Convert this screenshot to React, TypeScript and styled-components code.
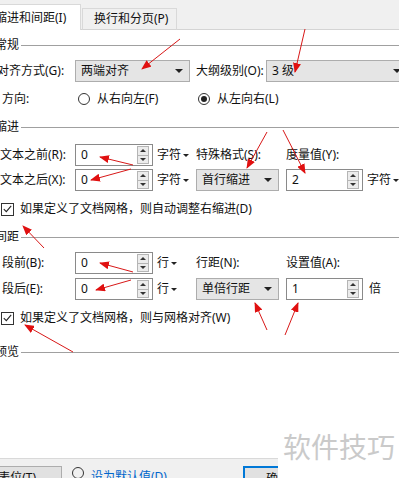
import React from 'react';
import styled, { createGlobalStyle } from 'styled-components';

const Global = createGlobalStyle`
	html, body {
		margin: 0;
		padding: 0;
		background: #fff;
	}
	body {
		font-family: 'Noto Sans', 'Noto Sans CJK SC', sans-serif;
		font-size: 12px;
		color: #111;
	}
`;

const Page = styled.div`
	position: relative;
	width: 399px;
	height: 478px;
	overflow: hidden;
	background: #fff;
	display: flex;
	flex-direction: column;
`;

const TabBar = styled.div`
	height: 30px;
	box-sizing: border-box;
	background: #f0f0f0;
	border-bottom: 1px solid #d4d4d4;
	display: flex;
	align-items: flex-end;
	margin-left: -10px;
`;

const Tab = styled.div<{ $active?: boolean }>`
	box-sizing: border-box;
	height: ${p => (p.$active ? '26px' : '22px')};
	width: ${p => (p.$active ? '91px' : '95px')};
	margin-bottom: -1px;
	margin-left: ${p => (p.$active ? '0' : '1px')};
	padding-left: ${p => (p.$active ? '4px' : '11px')};
	padding-bottom: ${p => (p.$active ? '0' : '1px')};
	background: ${p => (p.$active ? '#fff' : '#f0f0f0')};
	border: 1px solid #d9d9d9;
	border-bottom: ${p => (p.$active ? 'none' : '1px solid #d4d4d4')};
	display: flex;
	align-items: center;
	white-space: nowrap;
	line-height: 1;
`;

const SectionTitle = styled.div<{ $top: number }>`
	display: flex;
	align-items: center;
	height: 16px;
	margin-top: ${p => p.$top}px;
	margin-left: -5px;
	line-height: 1;
	white-space: nowrap;

	&::after {
		content: '';
		flex: 1;
		margin-left: 2px;
		border-top: 1px solid #a0a0a0;
	}
`;

const Row = styled.div<{ $top: number; $height?: number }>`
	display: flex;
	align-items: center;
	margin-top: ${p => p.$top}px;
	height: ${p => p.$height ?? 22}px;
	white-space: nowrap;
`;

const Label = styled.div<{ $width: number; $indent?: number }>`
	width: ${p => p.$width}px;
	flex: none;
	margin-left: ${p => p.$indent ?? 0}px;
	line-height: 1;
	white-space: nowrap;
`;

const Caret = styled.span`
	display: inline-block;
	width: 0;
	height: 0;
	border-left: 4px solid transparent;
	border-right: 4px solid transparent;
	border-top: 4px solid #222;
`;

const SmallCaret = styled(Caret)`
	border-left-width: 3px;
	border-right-width: 3px;
	border-top-width: 3px;
	margin-left: 2px;
	vertical-align: middle;
`;

const Select = styled.div<{ $width: number }>`
	box-sizing: border-box;
	width: ${p => p.$width}px;
	flex: none;
	height: 22px;
	background: #e5e5e5;
	border: 1px solid #adadad;
	display: flex;
	align-items: center;
	justify-content: space-between;
	padding: 0 ${p => (p.$width > 120 ? 4 : 6)}px 0 5px;
	line-height: 1;
`;

const Grid = styled.div<{ $top: number; $gap: number }>`
	display: grid;
	grid-template-columns: 75px 78px 43px 90px 77px 1fr;
	grid-auto-rows: 22px;
	row-gap: ${p => p.$gap}px;
	align-items: center;
	margin-top: ${p => p.$top}px;
	white-space: nowrap;
	line-height: 1;
`;

const SpinBox = styled.div`
	box-sizing: border-box;
	height: 22px;
	border: 1px solid #8a8a8a;
	background: #fff;
	display: flex;
	align-items: center;
	justify-content: space-between;
	padding: 1px 3px 1px 5px;
	line-height: 1;
`;

const SpinButtons = styled.div`
	display: flex;
	flex-direction: column;
	width: 12px;
	height: 18px;
`;

const SpinButton = styled.div<{ $down?: boolean }>`
	flex: 1;
	box-sizing: border-box;
	border: 1px solid #b5b5b5;
	margin-top: ${p => (p.$down ? '-1px' : '0')};
	background: #ececec;
	display: flex;
	align-items: center;
	justify-content: center;

	&::before {
		content: '';
		width: 0;
		height: 0;
		border-left: 3px solid transparent;
		border-right: 3px solid transparent;
		${p => (p.$down ? 'border-top: 3px solid #333;' : 'border-bottom: 3px solid #333;')}
	}
`;

const Unit = styled.div`
	padding-left: 4px;
	line-height: 1;
`;

const RadioItem = styled.div<{ $width?: number }>`
	display: flex;
	align-items: center;
	gap: 7px;
	width: ${p => (p.$width ? `${p.$width}px` : 'auto')};
	flex: none;
	line-height: 1;
`;

const RadioCircle = styled.span<{ $checked?: boolean }>`
	box-sizing: border-box;
	width: 12px;
	height: 12px;
	border-radius: 50%;
	border: 1px solid #333;
	display: flex;
	align-items: center;
	justify-content: center;

	&::after {
		content: '';
		width: 6px;
		height: 6px;
		border-radius: 50%;
		background: ${p => (p.$checked ? '#222' : 'transparent')};
	}
`;

const CheckRow = styled.div<{ $top: number }>`
	display: flex;
	align-items: center;
	gap: 6px;
	height: 16px;
	margin-top: ${p => p.$top}px;
	margin-left: 1px;
	white-space: nowrap;
	line-height: 1;
`;

const CheckBox = styled.span`
	box-sizing: border-box;
	width: 13px;
	height: 13px;
	border: 1px solid #333;
	display: flex;
	align-items: center;
	justify-content: center;
`;

const Spacer = styled.div`
	flex: 1;
`;

const Footer = styled.div`
	height: 20px;
	flex: none;
	box-sizing: border-box;
	background: #f0f0f0;
	border-top: 1px solid #d9d9d9;
	display: flex;
	align-items: flex-start;
	padding-top: 7px;
	white-space: nowrap;
`;

const FooterButton = styled.div<{ $primary?: boolean; $width: number; $left: number }>`
	box-sizing: border-box;
	width: ${p => p.$width}px;
	height: 24px;
	margin-left: ${p => p.$left}px;
	flex: none;
	background: #e1e1e1;
	border: ${p => (p.$primary ? '2px solid #0078d7' : '1px solid #adadad')};
	display: flex;
	justify-content: center;
	padding-top: 5px;
	line-height: 1;
`;

const LinkText = styled.span`
	color: #0066cc;
	line-height: 1;
	padding-top: 4px;
`;

const FooterRadio = styled(RadioItem)`
	margin-left: 10px;
	padding-top: 1px;
	align-items: flex-start;
`;

const Watermark = styled.div`
	position: absolute;
	left: 278px;
	top: 426px;
	width: 121px;
	height: 52px;
	background: #fff;
	padding-left: 5px;
	box-sizing: border-box;
	font-family: 'Noto Sans CJK SC', sans-serif;
	font-size: 28px;
	line-height: 40px;
	color: #cacaca;
	letter-spacing: 0;
	white-space: nowrap;
`;

const Overlay = styled.svg`
	position: absolute;
	left: 0;
	top: 0;
	pointer-events: none;
`;

const Spin: React.FC<{ value: string }> = ({ value }) => (
	<SpinBox>
		<span>{value}</span>
		<SpinButtons>
			<SpinButton />
			<SpinButton $down />
		</SpinButtons>
	</SpinBox>
);

const Check: React.FC<{ text: string; top: number }> = ({ text, top }) => (
	<CheckRow $top={top}>
		<CheckBox>
			<svg width='9' height='8' viewBox='0 0 9 8'>
				<path d='M0.8 4.2 L3.3 6.6 L8.2 0.8' fill='none' stroke='#222' strokeWidth='1.1' />
			</svg>
		</CheckBox>
		<span>{text}</span>
	</CheckRow>
);

const arrows: [number, number, number, number][] = [
	[180, 39, 142, 69],
	[305, 29, 295, 72],
	[133, 165, 100, 157],
	[131, 169, 91, 180],
	[267, 132, 247, 168],
	[283, 130, 305, 173],
	[44, 248, 23, 226],
	[133, 272, 100, 263],
	[131, 280, 96, 290],
	[73, 352, 25, 325],
	[267, 330, 255, 303],
	[285, 335, 298, 303],
];

const App: React.FC = () => (
	<Page>
		<Global />
		<TabBar>
			<Tab $active>缩进和间距(I)</Tab>
			<Tab>换行和分页(P)</Tab>
		</TabBar>

		<SectionTitle $top={7}>常规</SectionTitle>
		<Row $top={7}>
			<Label $width={75} $indent={-3}>对齐方式(G):</Label>
			<Select $width={115} style={{ marginLeft: 3 }}>
				<span>两端对齐</span>
				<Caret />
			</Select>
			<Label $width={70} $indent={6}>大纲级别(O):</Label>
			<Select $width={140}>
				<span>3 级</span>
				<Caret />
			</Select>
		</Row>
		<Row $top={9} $height={16}>
			<Label $width={76} $indent={2}>方向:</Label>
			<RadioItem $width={120}>
				<RadioCircle />
				<span>从右向左(F)</span>
			</RadioItem>
			<RadioItem>
				<RadioCircle $checked />
				<span>从左向右(L)</span>
			</RadioItem>
		</Row>

		<SectionTitle $top={12}>缩进</SectionTitle>
		<Grid $top={9} $gap={3}>
			<Label $width={75}>文本之前(R):</Label>
			<Spin value='0' />
			<Unit>
				字符<SmallCaret />
			</Unit>
			<div>特殊格式(S):</div>
			<div>度量值(Y):</div>
			<div />

			<Label $width={75}>文本之后(X):</Label>
			<Spin value='0' />
			<Unit>
				字符<SmallCaret />
			</Unit>
			<Select $width={83}>
				<span>首行缩进</span>
				<Caret />
			</Select>
			<Spin value='2' />
			<Unit>
				字符<SmallCaret />
			</Unit>
		</Grid>
		<Check top={10} text='如果定义了文档网格，则自动调整右缩进(D)' />

		<SectionTitle $top={12}>间距</SectionTitle>
		<Grid $top={7} $gap={4}>
			<Label $width={75} $indent={2}>段前(B):</Label>
			<Spin value='0' />
			<Unit>
				行<SmallCaret />
			</Unit>
			<div>行距(N):</div>
			<div>设置值(A):</div>
			<div />

			<Label $width={75} $indent={2}>段后(E):</Label>
			<Spin value='0' />
			<Unit>
				行<SmallCaret />
			</Unit>
			<Select $width={83}>
				<span>单倍行距</span>
				<Caret />
			</Select>
			<Spin value='1' />
			<Unit style={{ paddingLeft: 6 }}>倍</Unit>
		</Grid>
		<Check top={10} text='如果定义了文档网格，则与网格对齐(W)' />

		<SectionTitle $top={18}>预览</SectionTitle>
		<Spacer />

		<Footer>
			<FooterButton $width={92} $left={-30}>制表位(T)...</FooterButton>
			<FooterRadio>
				<RadioCircle />
				<LinkText>设为默认值(D)</LinkText>
			</FooterRadio>
			<FooterButton $primary $width={70} $left={76}>确定</FooterButton>
		</Footer>

		<Watermark>软件技巧</Watermark>

		<Overlay width='399' height='478' viewBox='0 0 399 478'>
			<defs>
				<marker id='head' markerWidth='10' markerHeight='8' refX='9' refY='4' orient='auto' markerUnits='userSpaceOnUse'>
					<path d='M0 0 L10 4 L0 8 Z' fill='#e01010' />
				</marker>
			</defs>
			{arrows.map(([x1, y1, x2, y2], i) => (
				<line key={i} x1={x1} y1={y1} x2={x2} y2={y2} stroke='#d81818' strokeWidth='1' markerEnd='url(#head)' />
			))}
		</Overlay>
	</Page>
);

export default App;
